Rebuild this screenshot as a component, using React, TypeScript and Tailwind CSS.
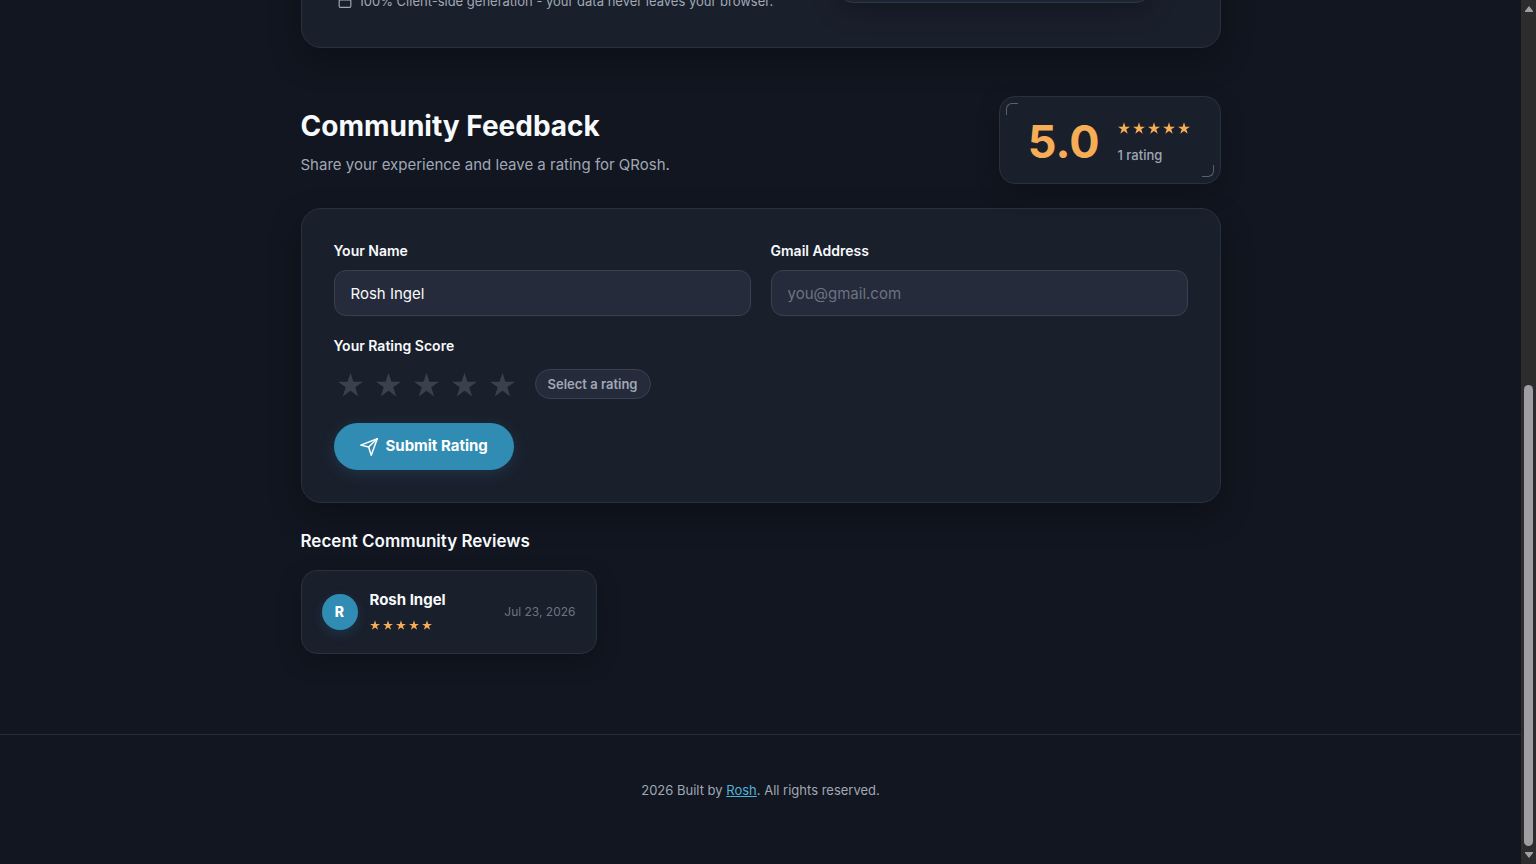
import { useState } from "react";

function Star({ className }: { className: string }) {
  return (
    <svg viewBox="0 0 24 24" fill="currentColor" aria-hidden="true" className={className}>
      <polygon points="12,0.6 14.83,9.3 24,9.3 16.58,14.68 19.42,23.4 12,18.01 4.58,23.4 7.42,14.68 0,9.3 9.17,9.3" />
    </svg>
  );
}

function StarRow({ size }: { size: string }) {
  return (
    <div role="img" aria-label="5 out of 5 stars" className="flex h-4 items-center gap-[3px] text-[#f6ad55]">
      {[1, 2, 3, 4, 5].map((n) => (
        <Star key={n} className={size} />
      ))}
    </div>
  );
}

function SendIcon() {
  return (
    <svg viewBox="0 0 24 24" fill="none" stroke="currentColor" strokeWidth="2" strokeLinecap="round" strokeLinejoin="round" aria-hidden="true" className="size-[18px]">
      <path d="M23 1 11.5 12" />
      <path d="M23 1 15 23 11.5 12 1 9.5Z" />
    </svg>
  );
}

function LockIcon() {
  return (
    <svg viewBox="0 0 24 24" fill="none" stroke="currentColor" strokeWidth="2" strokeLinecap="round" strokeLinejoin="round" aria-hidden="true" className="size-[14px] shrink-0">
      <rect x="2" y="10" width="20" height="13" rx="2" />
      <path d="M7 10V7a5 5 0 0 1 10 0v3" />
    </svg>
  );
}

const fieldClass =
  "h-[46px] w-full rounded-xl border border-[#3a414e] bg-[#252b3b] px-4 text-[15px] text-[#f7fafc] outline-none placeholder:text-[#6b7482]";

const labelClass = "mb-[9px] block text-sm font-semibold leading-5 text-[#f7fafc]";

function GeneratorCard() {
  return (
    <section className="-mt-10 grid grid-cols-2 rounded-b-[20px] border border-[#2a313e] bg-[#1a1f2c] px-8 shadow-[0_12px_32px_rgba(0,0,0,0.3)]">
      <p className="flex items-center gap-[7px] self-start whitespace-nowrap pl-1 pt-[30px] text-[13px] leading-5 text-[#a0a8b5]">
        <LockIcon />
        100% Client-side generation - your data never leaves your browser.
      </p>
      <div className="mb-11 ml-[76px] mr-9 h-[42px] rounded-b-2xl border border-[#2f3744] bg-[#1e2532] shadow-[0_8px_24px_rgba(0,0,0,0.25)]" />
    </section>
  );
}

function ScoreCard() {
  return (
    <div className="relative flex items-center gap-[18px] rounded-2xl border border-[#2a313e] bg-[#1a1f2c] px-7 pb-4 pt-5 shadow-[0_8px_24px_rgba(0,0,0,0.22)]">
      <span className="absolute left-1.5 top-1.5 size-3 rounded-tl-md border-l border-t border-[#5a616d]" />
      <span className="absolute bottom-1.5 right-1.5 size-3 rounded-br-md border-b border-r border-[#5a616d]" />
      <span className="text-[45px] font-bold leading-[50px] text-[#f6ad55]">5.0</span>
      <div className="flex flex-col gap-[9px] pr-0.5">
        <StarRow size="size-3" />
        <span className="text-[13px] font-medium leading-5 text-[#a0a8b5]">1 rating</span>
      </div>
    </div>
  );
}

function FeedbackForm() {
  const [name, setName] = useState("Rosh Ingel");
  const [rating, setRating] = useState(0);
  return (
    <form
      onSubmit={(e) => e.preventDefault()}
      className="mt-6 rounded-[20px] border border-[#2a313e] bg-[#1a1f2c] p-8 shadow-[0_12px_32px_rgba(0,0,0,0.3)]"
    >
      <div className="grid grid-cols-2 gap-5">
        <div>
          <label htmlFor="name" className={labelClass}>
            Your Name
          </label>
          <input id="name" type="text" value={name} onChange={(e) => setName(e.target.value)} className={fieldClass} />
        </div>
        <div>
          <label htmlFor="email" className={labelClass}>
            Gmail Address
          </label>
          <input id="email" type="email" placeholder="you@gmail.com" className={fieldClass} />
        </div>
      </div>
      <fieldset className="mt-5">
        <legend className="text-sm font-semibold leading-5 text-[#f7fafc]">Your Rating Score</legend>
        <div className="mt-[13px] flex items-center gap-5">
          <div className="flex gap-[13px] pl-1">
            {[1, 2, 3, 4, 5].map((n) => (
              <button
                key={n}
                type="button"
                aria-label={`Rate ${n}`}
                onClick={() => setRating(n)}
                className={n <= rating ? "text-[#f6ad55]" : "text-[#3a404c]"}
              >
                <Star className="size-[25px]" />
              </button>
            ))}
          </div>
          <span className="rounded-full border border-[#3a414e] bg-[#252b3b] px-3 py-1 text-[13px] font-semibold leading-5 text-[#a0a8b5]">
            {rating ? `${rating} / 5` : "Select a rating"}
          </span>
        </div>
      </fieldset>
      <button
        type="submit"
        className="mt-6 flex h-[47px] items-center gap-2 rounded-full bg-[#318cb3] px-[26px] text-[15px] font-bold text-white shadow-[0_4px_16px_rgba(49,140,179,0.2)]"
      >
        <SendIcon />
        Submit Rating
      </button>
    </form>
  );
}

function ReviewCard() {
  return (
    <article className="flex w-[296px] items-center gap-3 rounded-2xl border border-[#2a313e] bg-[#1a1f2c] p-5 shadow-[0_8px_24px_rgba(0,0,0,0.22)]">
      <span className="flex size-9 items-center justify-center rounded-full bg-[#318cb3] text-sm font-extrabold text-white shadow-[0_4px_12px_rgba(49,140,179,0.2)]">
        R
      </span>
      <div className="flex flex-col gap-2">
        <span className="text-[15px] font-bold leading-[18px] text-[#f7fafc]">Rosh Ingel</span>
        <StarRow size="size-2.5" />
      </div>
      <time dateTime="2026-07-23" className="ml-auto text-xs text-[#6b7482]">
        Jul 23, 2026
      </time>
    </article>
  );
}

function PageScrollbar() {
  return (
    <div aria-hidden="true" className="flex w-[15px] shrink-0 flex-col items-center bg-[#2c2c2c] py-1.5 text-[#9f9fa3]">
      <svg viewBox="0 0 8 6" fill="currentColor" className="h-1.5 w-2">
        <path d="M4 0 8 5V6H0V5Z" />
      </svg>
      <div className="grow-[373]" />
      <div className="w-[9px] grow-[461] rounded-full bg-[#9f9fa3]" />
      <svg viewBox="0 0 8 6" fill="currentColor" className="mt-1.5 h-1.5 w-2">
        <path d="M4 6 8 1V0H0V1Z" />
      </svg>
    </div>
  );
}

export default function App() {
  return (
    <div className="flex min-h-screen overflow-hidden bg-[#121620] font-['Inter',sans-serif] antialiased">
      <div className="flex grow flex-col">
        <main className="mx-auto w-full max-w-[920px] grow">
          <GeneratorCard />
          <section className="mt-12">
            <header className="flex items-center justify-between">
              <div>
                <h2 className="pt-1 text-[28px] font-bold leading-10 text-[#f7fafc]">Community Feedback</h2>
                <p className="mt-1.5 text-[15px] leading-[26px] text-[#a0a8b5]">
                  Share your experience and leave a rating for QRosh.
                </p>
              </div>
              <ScoreCard />
            </header>
            <FeedbackForm />
            <h3 className="mb-[15px] mt-6 text-[17px] font-semibold leading-7 text-[#f7fafc]">
              Recent Community Reviews
            </h3>
            <ReviewCard />
          </section>
        </main>
        <footer className="border-t border-[#252b36] pb-[62px] pt-[43px] text-center text-[13px] leading-6 text-[#a0a8b5]">
          2026 Built by{" "}
          <a href="#rosh" className="text-[#4fb3d9] underline">
            Rosh
          </a>
          . All rights reserved.
        </footer>
      </div>
      <PageScrollbar />
    </div>
  );
}
